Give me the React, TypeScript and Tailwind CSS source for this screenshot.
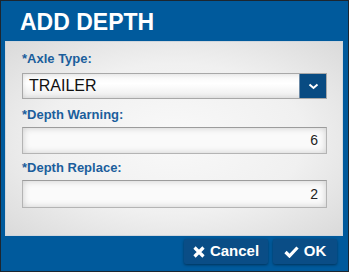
import React from 'react';

const font = { fontFamily: '"Liberation Sans", Arial, sans-serif' };

function Field({ value }: { value: string }) {
  return (
    <div className="h-full w-full border border-[#b4b4b4] border-t-[#9c9c9c] bg-[#fafafa] shadow-[inset_0_0_7px_rgba(0,0,0,0.18)] flex items-center justify-end pr-[8px] text-[14px] text-[#222]">
      {value}
    </div>
  );
}

export default function App() {
  return (
    <div
      className="w-[349px] h-[272px] bg-[#005a9c] border border-[#1c2630] flex flex-col"
      style={font}
    >
      {/* ── Title ── */}
      <div className="h-[40px] flex items-center pl-[19px] pt-[2px]">
        <h1 className="text-[23px] font-bold text-white leading-none">ADD DEPTH</h1>
      </div>

      {/* ── Form panel ── */}
      <div className="mx-[4px] w-[338px] h-[195px] bg-[radial-gradient(ellipse_at_center,#f9f9f9_0%,#f0f0f0_55%,#dadada_100%)] border border-[#cfd6dd] pl-[16px] pr-[15px] pt-[9px]">
        <div className="h-4 leading-4 text-[13px] font-bold text-[#1b5e9c]">*Axle Type:</div>
        <div className="mt-[6px] h-[26px] flex border border-[#a8a8a8] bg-[linear-gradient(#f6f6f6,#ffffff_40%,#ececec)] shadow-[inset_0_0_5px_rgba(0,0,0,0.12)]">
          <div className="flex-1 flex items-center pl-[6px] text-[16px] text-[#111]">TRAILER</div>
          <div className="w-[27px] bg-[#084b82] border-l border-[#6c8aa6] flex items-center justify-center">
            <svg width="11" height="7" viewBox="0 0 11 7">
              <path d="M1.5 1.5 L5.5 5 L9.5 1.5" fill="none" stroke="white" strokeWidth="2" />
            </svg>
          </div>
        </div>

        <div className="mt-[8px] h-4 leading-4 text-[13px] font-bold text-[#1b5e9c]">*Depth Warning:</div>
        <div className="mt-[4px] h-[27px]">
          <Field value="6" />
        </div>

        <div className="mt-[6px] h-4 leading-4 text-[13px] font-bold text-[#1b5e9c]">*Depth Replace:</div>
        <div className="mt-[4px] h-[28px]">
          <Field value="2" />
        </div>
      </div>

      {/* ── Buttons ── */}
      <div className="flex justify-end gap-[5px] pr-[11px] pt-[3px]">
        <button className="w-[84px] h-[25px] bg-[#0a4d86] rounded-[2px] shadow-[0_1px_3px_rgba(0,0,0,0.45)] flex items-center justify-center gap-[5px] text-white text-[15px] font-bold">
          <svg width="12" height="12" viewBox="0 0 12 12">
            <path d="M1.5 1.5 L10.5 10.5 M10.5 1.5 L1.5 10.5" stroke="white" strokeWidth="3.2" />
          </svg>
          Cancel
        </button>
        <button className="w-[64px] h-[25px] bg-[#0a4d86] rounded-[2px] shadow-[0_1px_3px_rgba(0,0,0,0.45)] flex items-center justify-center gap-[5px] text-white text-[15px] font-bold">
          <svg width="15" height="12" viewBox="0 0 15 12">
            <path d="M1.5 6 L5.5 10 L13.5 1.5" fill="none" stroke="white" strokeWidth="3.2" />
          </svg>
          OK
        </button>
      </div>
    </div>
  );
}
